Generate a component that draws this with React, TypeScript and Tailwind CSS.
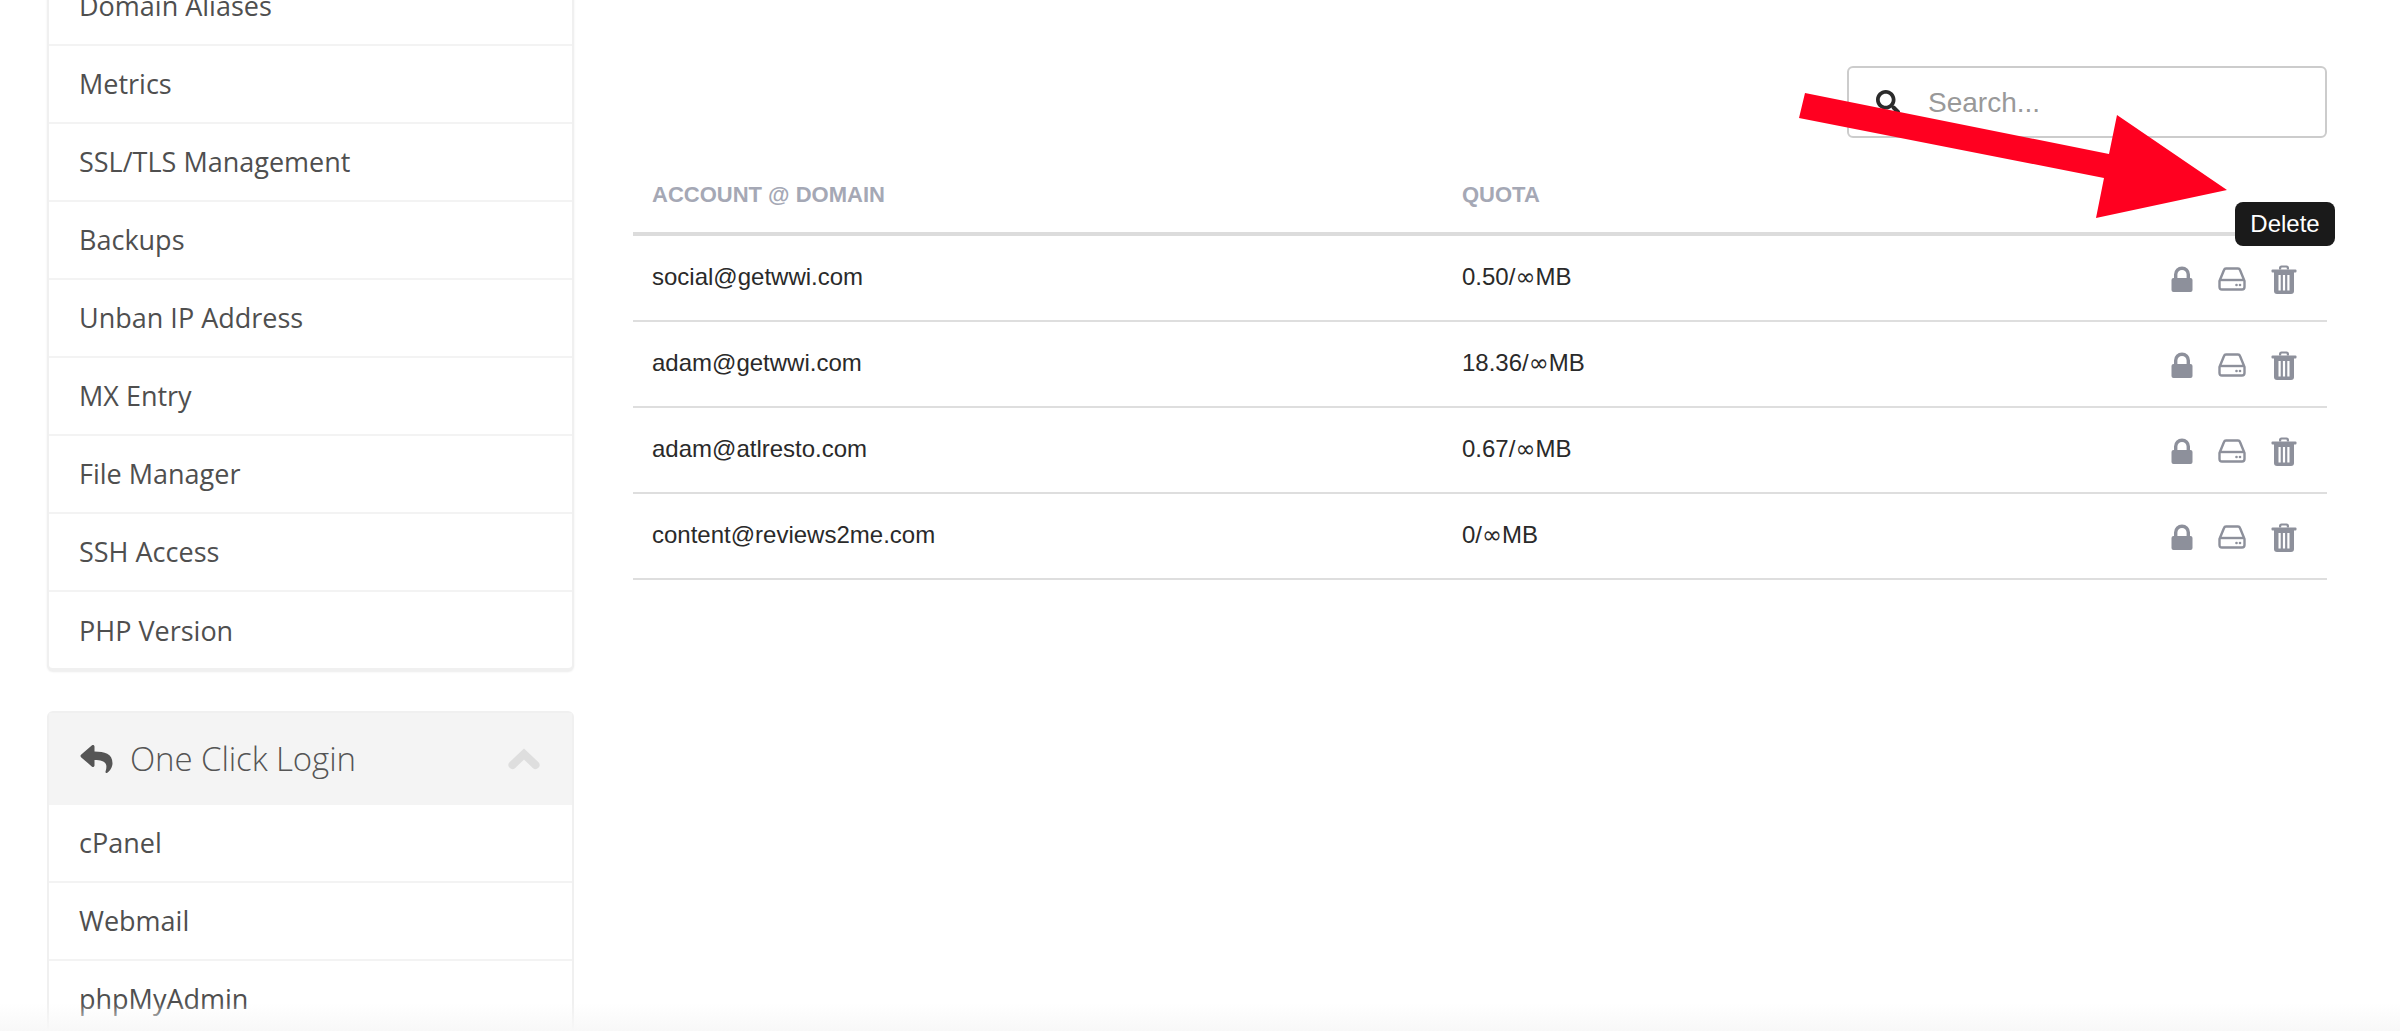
import React from "react";
import { FaReply, FaSearch } from "react-icons/fa";

const open = { fontFamily: '"Open Sans", sans-serif' };

const menu1 = ["Domain Aliases", "Metrics", "SSL/TLS Management", "Backups", "Unban IP Address", "MX Entry", "File Manager", "SSH Access", "PHP Version"];
const menu2 = ["cPanel", "Webmail", "phpMyAdmin"];
const rows = [
  ["social@getwwi.com", "0.50/", "MB"],
  ["adam@getwwi.com", "18.36/", "MB"],
  ["adam@atlresto.com", "0.67/", "MB"],
  ["content@reviews2me.com", "0/", "MB"],
];

function Row({ label, last }: { label: string; last?: boolean }) {
  return (
    <div className={"flex items-center pl-[30px] text-[27px] text-[#4f4f4f] border-[#f3f3f3] " + (last ? "h-[76px] pt-[2px]" : "h-[78px] border-b-2")}>
      {label}
    </div>
  );
}

function LockIcon() {
  return (
    <svg width="22" height="26" viewBox="0 0 22 26" fill="#8d909b">
      <path d="M3 13V8.500a8 8 0 0 1 16 0V13h-3.400V8.500a4.600 4.600 0 0 0-9.200 0V13z" />
      <rect x="0.500" y="12" width="21" height="14" rx="2" />
    </svg>
  );
}

function DriveIcon() {
  return (
    <svg width="28" height="24" viewBox="0 0 28 24" fill="none" stroke="#8d909b" strokeWidth="2.400">
      <path d="M1.500 14 L6 3 Q6.500 1.500 8 1.500 H20 Q21.500 1.500 22 3 L26.500 14 V20 Q26.500 22.500 24 22.500 H4 Q1.500 22.500 1.500 20 Z" />
      <path d="M1.500 13 H26.500" />
      <circle cx="18.500" cy="18" r="1.300" fill="#8d909b" stroke="none" />
      <circle cx="22" cy="18" r="1.300" fill="#8d909b" stroke="none" />
    </svg>
  );
}

function TrashIcon() {
  return (
    <svg width="26" height="29" viewBox="0 0 26 29" fill="#8d909b">
      <path d="M8 4.500V3q0-2.500 2.500-2.500h5Q18 .5 18 3v1.500h-2.200V3.200q0-.6-.6-.6h-4.400q-.6 0-.6.6v1.300z" />
      <rect x="0.500" y="4.500" width="25" height="3" rx="1" />
      <path d="M3 7h20v19q0 3-3 3H6q-3 0-3-3z" />
      <rect x="7.500" y="10" width="2.200" height="15.500" fill="#fff" />
      <rect x="11.900" y="10" width="2.200" height="15.500" fill="#fff" />
      <rect x="16.300" y="10" width="2.200" height="15.500" fill="#fff" />
    </svg>
  );
}

function ChevronIcon() {
  return (
    <svg width="32" height="22" viewBox="0 0 32 22" fill="none" stroke="#dedede" strokeWidth="8" strokeLinecap="round" strokeLinejoin="miter">
      <path d="M4.500 17 L16 6 L27.500 17" />
    </svg>
  );
}

export default function App() {
  return (
    <div className="relative flex h-[1031px] w-[2400px] overflow-hidden bg-white">
      <aside className="ml-[47px] w-[527px] shrink-0" style={open}>
        <div className="-mt-[34px] rounded-[6px] border-2 border-[#f0f0f0] border-b-[3px] bg-white shadow-[0_1px_2px_rgba(0,0,0,0.08)]">
          {menu1.map((m, i) => (
            <Row key={m} label={m} last={i === menu1.length - 1} />
          ))}
        </div>
        <div className="mt-[40px] rounded-[6px] border-2 border-[#f0f0f0] bg-white">
          <div className="flex h-[92px] items-center justify-between bg-[#f4f4f4] pl-[30px] pr-[32px] text-[#555]">
            <div className="flex items-center gap-[16px]">
              <FaReply className="h-[32px] w-[35px]" />
              <span className="text-[33px] font-light tracking-[-0.1px]">One Click Login</span>
            </div>
            <ChevronIcon />
          </div>
          {menu2.map((m) => (
            <Row key={m} label={m} />
          ))}
        </div>
      </aside>

      <main className="ml-[59px] w-[1694px] pt-[66px] text-[#2a2a2a]" style={{ fontFamily: '"Liberation Sans", Arial, sans-serif' }}>
        <div className="flex justify-end">
          <div className="flex h-[72px] w-[480px] items-center rounded-[6px] border-2 border-[#cccccc] pl-[27px]">
            <FaSearch className="h-[24px] w-[24px] text-[#2b2b2b]" />
            <span className="ml-[28px] pt-[2px] text-[28px] leading-[36px] text-[#999]">Search...</span>
          </div>
        </div>
        <div className="flex h-[98px] items-center border-b-4 border-[#dcdcdc] pl-[19px] pt-[19px] text-[22px] font-bold text-[#a5a8b5]">
          <span className="w-[810px]">ACCOUNT @ DOMAIN</span>
          <span>QUOTA</span>
        </div>
        {rows.map(([account, used, unit]) => (
          <div key={account} className="flex h-[86px] items-center border-b-2 border-[#dedede] pl-[19px] pr-[30px] text-[24px]">
            <span className="w-[810px] pb-[3px]">{account}</span>
            <span className="flex-1 pb-[3px]">
              {used}
              <span className="[font-family:'DejaVu_Sans',sans-serif]">∞</span>
              {unit}
            </span>
            <div className="flex items-center gap-[25px] pt-[2px]">
              <LockIcon />
              <DriveIcon />
              <TrashIcon />
            </div>
          </div>
        ))}
      </main>

      <svg className="absolute left-0 top-0" width="2400" height="300" viewBox="0 0 2400 300">
        <polygon points="1805,93 1799,118 2104,178 2096,218 2227,190 2117,115 2109,154" fill="#ff0020" />
      </svg>
      <div
        className="absolute left-[2235px] top-[202px] flex h-[44px] w-[100px] items-center justify-center rounded-[8px] bg-[#1a1a1a] text-[24px] text-white"
        style={{ fontFamily: '"Liberation Sans", Arial, sans-serif' }}
      >
        Delete
      </div>
      <div className="pointer-events-none absolute inset-x-0 bottom-0 h-[28px] bg-gradient-to-b from-transparent to-[#f8f8f8]" />
    </div>
  );
}
